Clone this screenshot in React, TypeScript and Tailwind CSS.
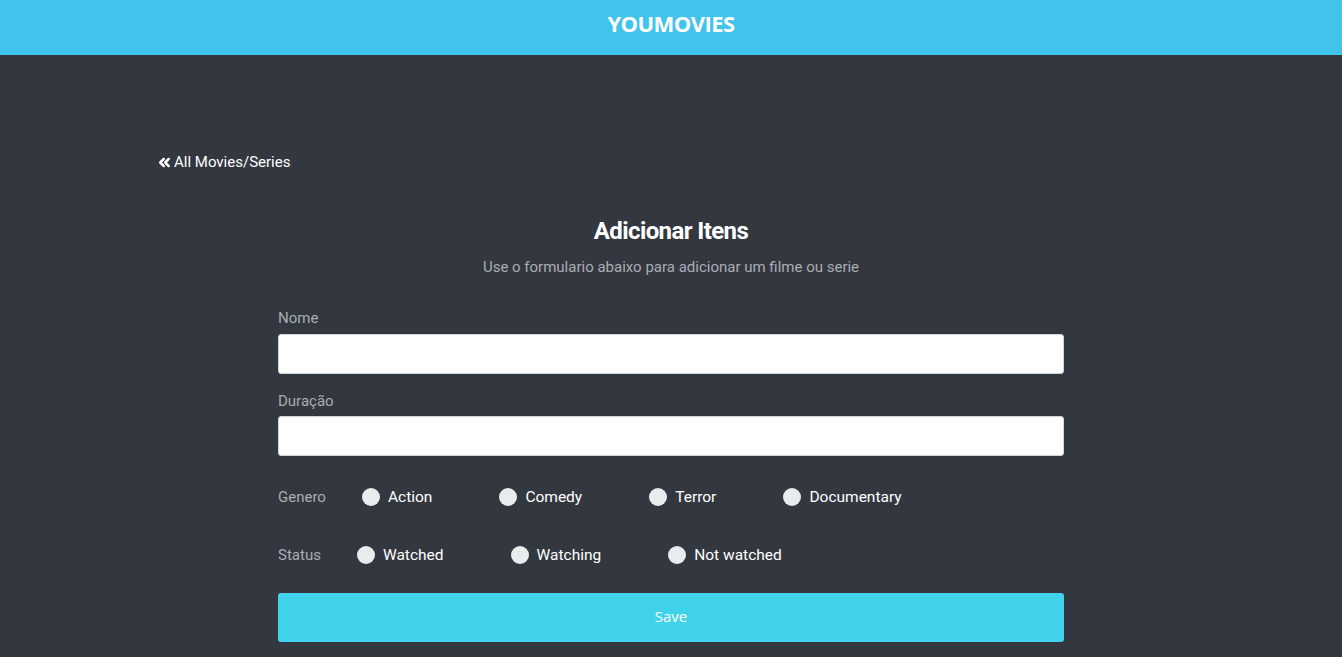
import { ChevronsLeft } from 'lucide-react';

const generos = ['Action', 'Comedy', 'Terror', 'Documentary'];
const status = ['Watched', 'Watching', 'Not watched'];

function Radio({ label }: { label: string }) {
  return (
    <label className="flex items-center mr-[67px]">
      <span className="w-[18px] h-[18px] rounded-full bg-[#e9ecef] mr-[8px]"></span>
      <span className="text-[15.5px] text-white">{label}</span>
    </label>
  );
}

export default function App() {
  return (
    <div className="min-h-[657px] bg-[#33373f] font-['Roboto',sans-serif]">
      <header className="h-[55px] bg-[#40c4eb] flex items-center justify-center">
        <h1 className="text-[22px] font-bold text-white tracking-tight font-['Open_Sans',sans-serif] -mt-[8px]">
          YOUMOVIES
        </h1>
      </header>

      <div className="w-[1026px] mx-auto pt-[96px]">
        <a href="#" className="inline-flex items-center text-[15px] text-white -ml-[2px]">
          <ChevronsLeft size={17} strokeWidth={3.5} className="mr-[1px]" />
          All Movies/Series
        </a>

        <div className="w-[786px] mx-auto mt-[35px]">
          <h2 className="text-center text-[24px] font-bold text-white tracking-tight">Adicionar Itens</h2>
          <p className="text-center text-[15px] text-[#a9adb4] mt-[7px]">
            Use o formulario abaixo para adicionar um filme ou serie
          </p>

          <form className="mt-[29px]">
            <label className="block text-[15px] text-[#a9adb4] mb-[4px]">Nome</label>
            <input className="block w-full h-[40px] bg-white rounded-[3px] border border-[#ced4da]" />

            <label className="block text-[15px] text-[#a9adb4] mt-[16px] mb-[4px]">Duração</label>
            <input className="block w-full h-[40px] bg-white rounded-[3px] border border-[#ced4da]" />

            <div className="flex items-center mt-[31px] h-[20px]">
              <span className="text-[15px] text-[#a9adb4] mr-[36px]">Genero</span>
              {generos.map((g) => (
                <Radio key={g} label={g} />
              ))}
            </div>

            <div className="flex items-center mt-[38px] h-[20px]">
              <span className="text-[15px] text-[#a9adb4] mr-[36px]">Status</span>
              {status.map((s) => (
                <Radio key={s} label={s} />
              ))}
            </div>

            <button
              type="button"
              className="w-full h-[49px] mt-[28px] pb-[3px] bg-[#41d3ec] rounded-[3px] text-white text-[15px] font-['Open_Sans',sans-serif]"
            >
              Save
            </button>
          </form>
        </div>
      </div>
    </div>
  );
}
